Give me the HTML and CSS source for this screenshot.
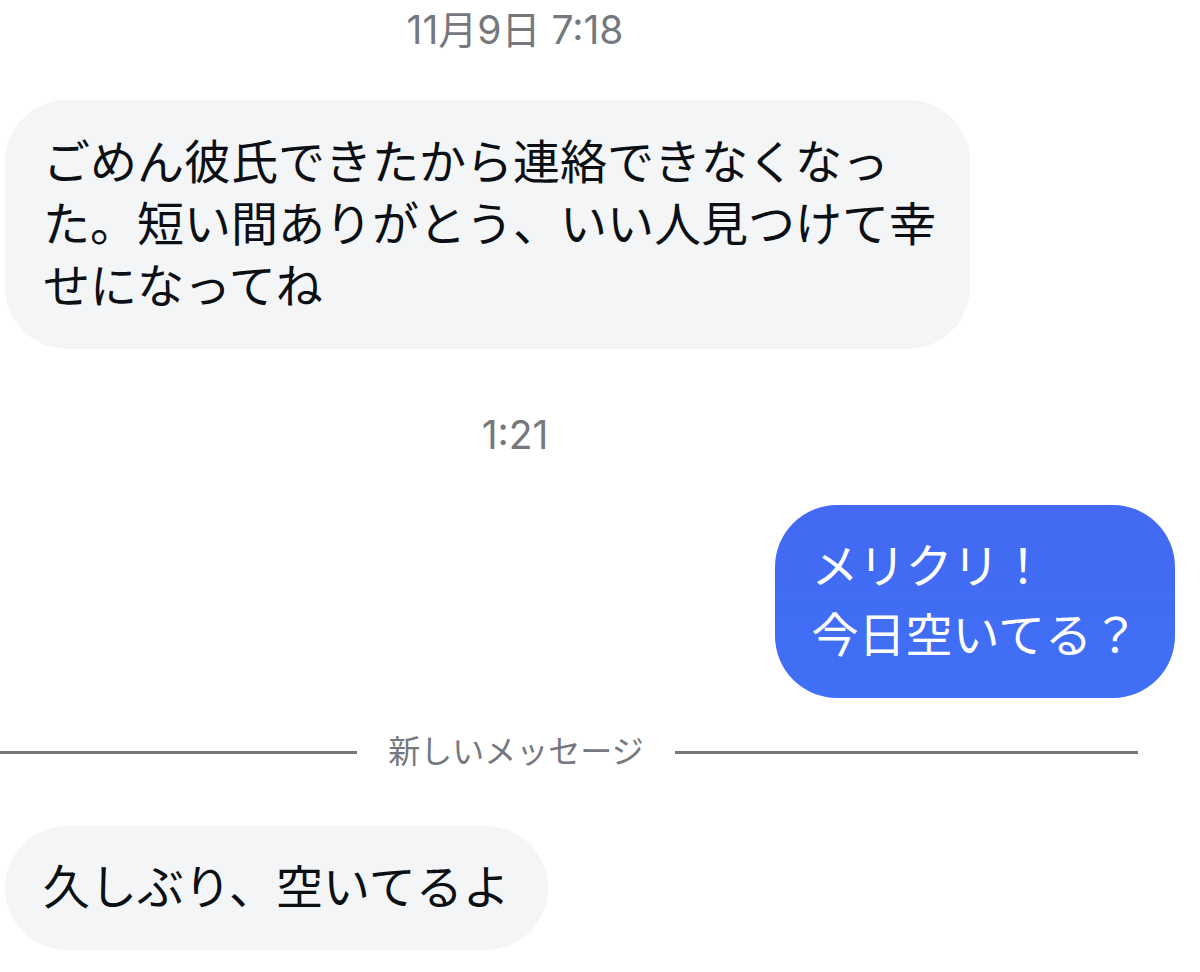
FILE: index.html
```html
<!DOCTYPE html>
<html lang="ja">
  <head>
    <meta charset="UTF-8" />
    <meta name="viewport" content="width=device-width, initial-scale=1.0" />
    <title>メッセージ</title>
    <link rel="stylesheet" href="styles.css">
  </head>
  <body>
    <main class="chat">
      <time class="chat__time">11月9日 7:18</time>
      <p class="bubble">ごめん彼氏できたから連絡できなくなった。短い間ありがとう、いい人見つけて幸せになってね</p>
      <time class="chat__time">1:21</time>
      <p class="bubble bubble--sent">メリクリ！<br>今日空いてる？</p>
      <div class="divider"><span>新しいメッセージ</span></div>
      <p class="bubble bubble--new">久しぶり、空いてるよ</p>
    </main>
  </body>
</html>
```

FILE: styles.css
```css
* {
  box-sizing: border-box;
}

body {
  margin: 0;
  background: #fff;
  color: #0c1014;
  font-family: Inter, "Noto Sans CJK JP", sans-serif;
}

.chat {
  display: flex;
  flex-direction: column;
  align-items: flex-start;
  padding: 8px 25px 20px 5px;
}

.chat__time {
  align-self: stretch;
  padding-right: 150px;
  color: #75787d;
  font-size: 39px;
  line-height: 44px;
  text-align: center;
}

.bubble {
  max-width: 965px;
  margin: 48px 0 64px;
  padding: 31px 34px 32px 38px;
  border-radius: 62px;
  background: #f3f5f7;
  font-size: 47px;
  line-height: 62px;
}

.bubble--sent {
  align-self: flex-end;
  margin: 48px 0 32px;
  padding: 26px 36px 29px;
  background: linear-gradient(#4369f2, #3f70f6);
  color: #fff;
  line-height: 69px;
}

.bubble--new {
  margin: 52px 0 0;
  padding: 30px 38px 32px;
}

.divider {
  align-self: stretch;
  display: flex;
  align-items: center;
  gap: 31px;
  margin: 0 37px 0 -5px;
  color: #75787d;
  font-size: 32px;
  line-height: 44px;
}

.divider::before,
.divider::after {
  content: "";
  flex: 357;
  height: 3px;
  background: #75787d;
}

.divider::after {
  flex: 463;
}
```
